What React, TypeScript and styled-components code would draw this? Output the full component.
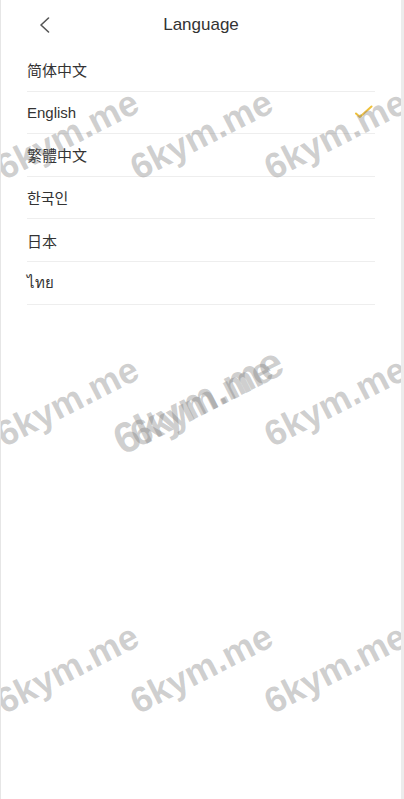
import React from "react";
import styled, { createGlobalStyle } from "styled-components";

const GlobalStyle = createGlobalStyle`
    html, body {
        margin: 0;
        padding: 0;
        background: #ececec;
    }
    body {
        font-family: "Liberation Sans", "Noto Sans CJK SC", sans-serif;
    }
`;

const languages = ["简体中文", "English", "繁體中文", "한국인", "日本", "ไทย"];
const current = "English";

// watermark anchors: left / top of each rotated label
const marks = [
    { x: 6, y: 150, size: 36 },
    { x: 140, y: 150, size: 36 },
    { x: 274, y: 150, size: 36 },
    { x: 6, y: 417, size: 36 },
    { x: 140, y: 417, size: 36 },
    { x: 274, y: 417, size: 36 },
    { x: 125, y: 419, size: 43 },
    { x: 6, y: 684, size: 36 },
    { x: 140, y: 684, size: 36 },
    { x: 274, y: 684, size: 36 },
];

const App = () => {
    return (
        <>
            <GlobalStyle />
            <Page>
                <Header>
                    <BackButton aria-label="back">
                        <svg width="12" height="16" viewBox="0 0 12 16">
                            <polyline
                                points="9.5,1 2,8 9.5,15"
                                fill="none"
                                stroke="#555"
                                strokeWidth="1.6"
                                strokeLinecap="round"
                                strokeLinejoin="round"
                            />
                        </svg>
                    </BackButton>
                    <Title>Language</Title>
                    <Spacer />
                </Header>
                <List>
                    {languages.map((lang) => (
                        <Row key={lang}>
                            <Label>{lang}</Label>
                            {lang === current && (
                                <svg width="18" height="14" viewBox="0 0 18 14">
                                    <polyline
                                        points="1,8.5 4.8,12 16.5,1.5"
                                        fill="none"
                                        stroke="#efc13a"
                                        strokeWidth="2"
                                        strokeLinecap="round"
                                        strokeLinejoin="round"
                                    />
                                </svg>
                            )}
                        </Row>
                    ))}
                </List>
                <Watermarks>
                    {marks.map((m, i) => (
                        <Mark
                            key={i}
                            style={{ left: m.x, top: m.y, fontSize: m.size }}
                        >
                            6kym.me
                        </Mark>
                    ))}
                </Watermarks>
            </Page>
        </>
    );
};

export default App;

const Page = styled.div`
    position: relative;
    width: 400px;
    min-height: 100vh;
    background: #fff;
    border-left: 1px solid #e6e6e6;
    overflow: hidden;
`;

const Header = styled.header`
    display: flex;
    align-items: center;
    height: 49px;
`;

const BackButton = styled.div`
    display: flex;
    align-items: center;
    width: 80px;
    height: 100%;
    padding-left: 38px;
    box-sizing: border-box;
    cursor: pointer;
`;

const Title = styled.h1`
    flex: 1;
    margin: 0;
    text-align: center;
    font-size: 17px;
    font-weight: normal;
    color: #333;
`;

const Spacer = styled.div`
    width: 80px;
`;

const List = styled.ul`
    list-style: none;
    margin: 0 26px;
    padding: 0;
`;

const Row = styled.li`
    display: flex;
    align-items: center;
    justify-content: space-between;
    height: 42.6px;
    border-bottom: 1px solid #eeeeee;
    box-sizing: border-box;
    padding-right: 2px;
`;

const Label = styled.span`
    font-size: 15px;
    color: #333;
    font-family: "Liberation Sans", "Noto Sans CJK SC", "Noto Sans", sans-serif;
`;

const Watermarks = styled.div`
    position: absolute;
    inset: 0;
    pointer-events: none;
`;

const Mark = styled.span`
    position: absolute;
    line-height: 1;
    font-weight: bold;
    white-space: nowrap;
    color: rgba(128, 128, 128, 0.38);
    transform-origin: 0 100%;
    transform: rotate(-27deg);
`;
